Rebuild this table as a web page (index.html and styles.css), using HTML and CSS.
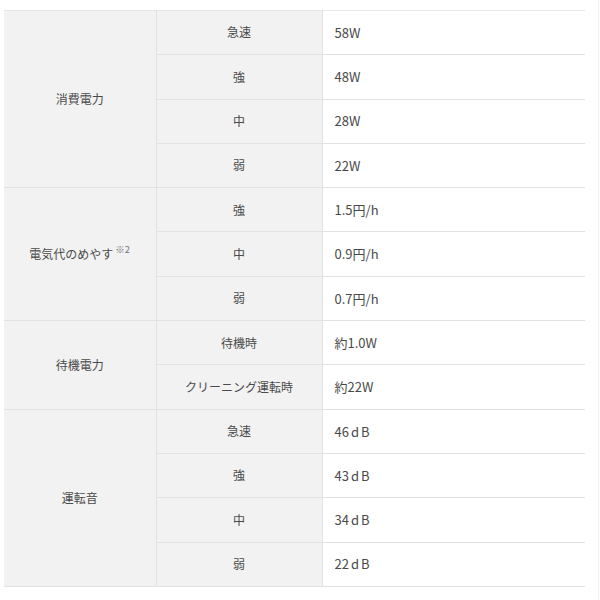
FILE: index.html
```html
<!DOCTYPE html>
<html lang="ja">
<head>
<meta charset="utf-8">
<link rel="stylesheet" href="styles.css">
</head>
<body>
<div class="frame">
<table class="spec">
<colgroup><col class="c1"><col class="c2"><col class="c3"></colgroup>
<tbody>
<tr><th rowspan="4" class="grp">消費電力</th><th class="sub">急速</th><td>58W</td></tr>
<tr><th class="sub">強</th><td>48W</td></tr>
<tr><th class="sub">中</th><td>28W</td></tr>
<tr><th class="sub">弱</th><td>22W</td></tr>
<tr><th rowspan="3" class="grp">電気代のめやす<sup>※2</sup></th><th class="sub">強</th><td>1.5円/h</td></tr>
<tr><th class="sub">中</th><td>0.9円/h</td></tr>
<tr><th class="sub">弱</th><td>0.7円/h</td></tr>
<tr><th rowspan="2" class="grp">待機電力</th><th class="sub">待機時</th><td>約1.0W</td></tr>
<tr><th class="sub">クリーニング運転時</th><td>約22W</td></tr>
<tr><th rowspan="4" class="grp">運転音</th><th class="sub">急速</th><td>46<span class="u">dB</span></td></tr>
<tr><th class="sub">強</th><td>43<span class="u">dB</span></td></tr>
<tr><th class="sub">中</th><td>34<span class="u">dB</span></td></tr>
<tr><th class="sub">弱</th><td>22<span class="u">dB</span></td></tr>
</tbody>
</table>
</div>
</body>
</html>
```
FILE: styles.css
```css
html, body { margin: 0; padding: 0; background: #fff; }
body {
  font-family: "Noto Sans CJK JP", "Noto Sans", sans-serif;
  font-size: 12px;
  color: #4a4a4a;
}
.frame {
  width: 594px;
  padding: 10px 0 13px 4px;
  border-right: 1px solid #f0f0f0;
}
.spec {
  border-collapse: collapse;
  width: 581px;
  table-layout: fixed;
}
.c1 { width: 152px; }
.c2 { width: 166px; }
.c3 { width: 263px; }
.spec th, .spec td {
  border: 1px solid #e2e2e2;
  height: 43.3px;
  padding: 0;
  font-weight: normal;
  line-height: 1.2;
}
.spec th {
  background: #f2f2f2;
  text-align: center;
}
.spec tr:first-child th, .spec tr:first-child td { border-top-color: #e6e6e6; }
.spec td {
  text-align: left;
  padding-left: 12px;
  border-right: none;
  font-size: 13px;
}
.spec th.grp { border-left: none; }
sup {
  font-size: 9.5px;
  color: #777;
  vertical-align: top;
  position: relative;
  top: -3px;
  margin-left: 2px;
}
.u { letter-spacing: 2px; margin-left: 2px; }
```
